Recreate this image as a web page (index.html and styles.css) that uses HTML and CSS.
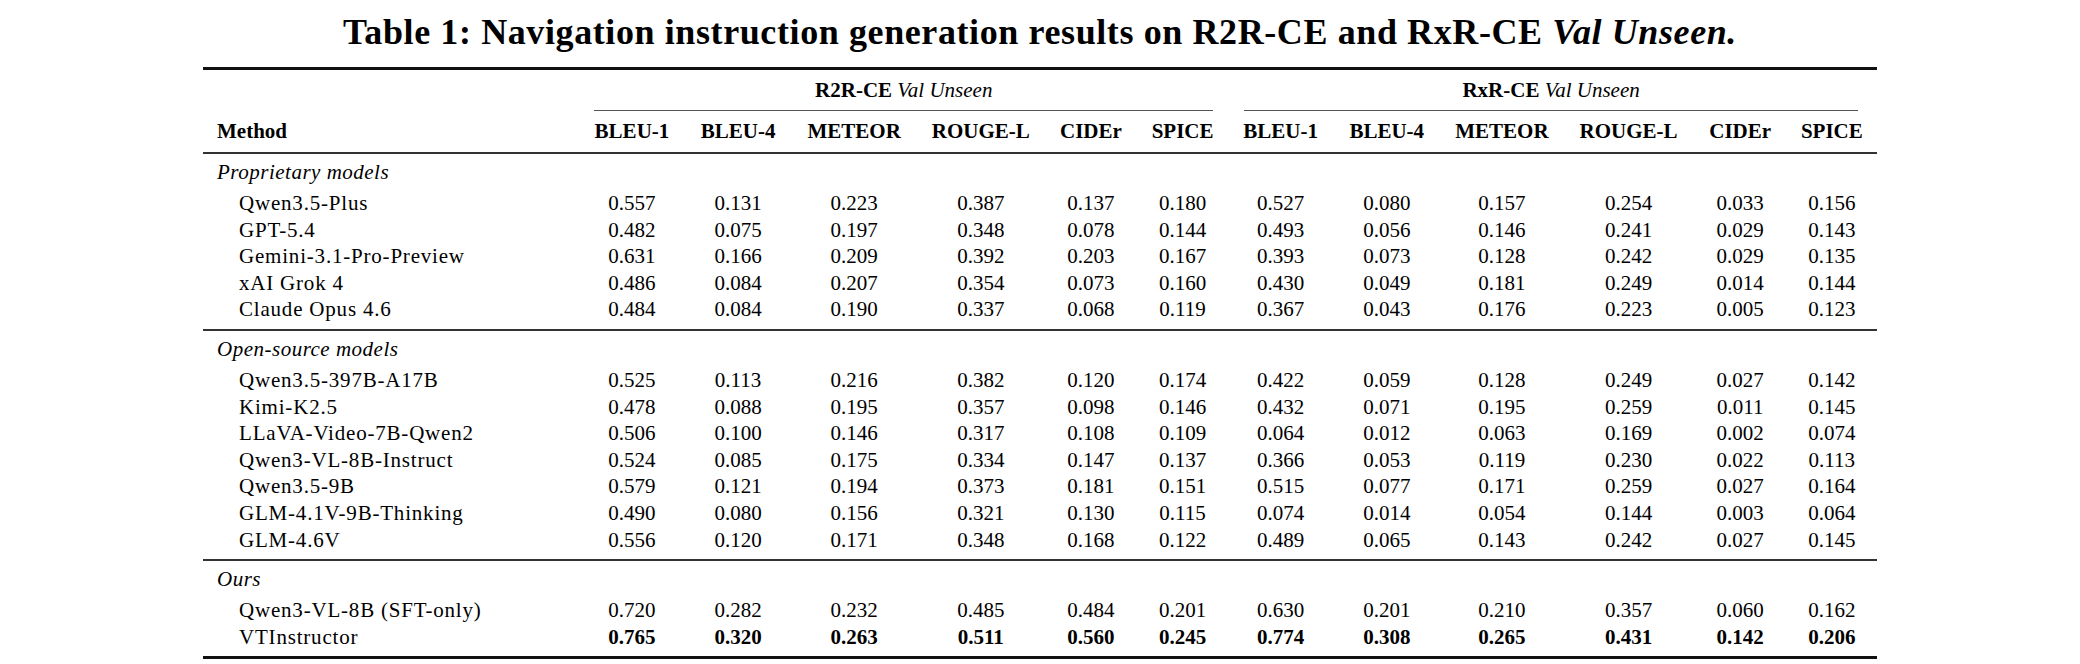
FILE: index.html
```html
<!DOCTYPE html>
<html lang="en">
<head>
    <meta charset="UTF-8">
    <title>Table 1: Navigation instruction generation results</title>
    <link rel="stylesheet" href="styles.css">
</head>
<body>
    <div class="page">
        <h1 class="caption">Table 1: Navigation instruction generation results on R2R-CE and RxR-CE <em>Val Unseen.</em></h1>

        <table class="results">
            <colgroup>
                <col class="c-method">
                <col class="c-b1"><col class="c-b4"><col class="c-met"><col class="c-rou"><col class="c-cid"><col class="c-spi">
                <col class="c-b1"><col class="c-b4"><col class="c-met2"><col class="c-rou2"><col class="c-cid2"><col class="c-spi2">
            </colgroup>
            <thead>
                <tr class="group-row">
                    <th></th>
                    <th colspan="6"><div class="group-label"><b>R2R-CE</b> <i>Val Unseen</i></div></th>
                    <th colspan="6"><div class="group-label group-right"><b>RxR-CE</b> <i>Val Unseen</i></div></th>
                </tr>
                <tr class="metric-row">
                    <th class="method">Method</th>
                    <th>BLEU-1</th><th>BLEU-4</th><th>METEOR</th><th>ROUGE-L</th><th>CIDEr</th><th>SPICE</th>
                    <th>BLEU-1</th><th>BLEU-4</th><th>METEOR</th><th>ROUGE-L</th><th>CIDEr</th><th>SPICE</th>
                </tr>
            </thead>

            <!-- Proprietary models -->
            <tbody>
                <tr class="section"><td colspan="13"><i>Proprietary models</i></td></tr>
                <tr><td class="name">Qwen3.5-Plus</td><td>0.557</td><td>0.131</td><td>0.223</td><td>0.387</td><td>0.137</td><td>0.180</td><td>0.527</td><td>0.080</td><td>0.157</td><td>0.254</td><td>0.033</td><td>0.156</td></tr>
                <tr><td class="name">GPT-5.4</td><td>0.482</td><td>0.075</td><td>0.197</td><td>0.348</td><td>0.078</td><td>0.144</td><td>0.493</td><td>0.056</td><td>0.146</td><td>0.241</td><td>0.029</td><td>0.143</td></tr>
                <tr><td class="name">Gemini-3.1-Pro-Preview</td><td>0.631</td><td>0.166</td><td>0.209</td><td>0.392</td><td>0.203</td><td>0.167</td><td>0.393</td><td>0.073</td><td>0.128</td><td>0.242</td><td>0.029</td><td>0.135</td></tr>
                <tr><td class="name">xAI Grok 4</td><td>0.486</td><td>0.084</td><td>0.207</td><td>0.354</td><td>0.073</td><td>0.160</td><td>0.430</td><td>0.049</td><td>0.181</td><td>0.249</td><td>0.014</td><td>0.144</td></tr>
                <tr class="last"><td class="name">Claude Opus 4.6</td><td>0.484</td><td>0.084</td><td>0.190</td><td>0.337</td><td>0.068</td><td>0.119</td><td>0.367</td><td>0.043</td><td>0.176</td><td>0.223</td><td>0.005</td><td>0.123</td></tr>
            </tbody>

            <!-- Open-source models -->
            <tbody>
                <tr class="section"><td colspan="13"><i>Open-source models</i></td></tr>
                <tr><td class="name">Qwen3.5-397B-A17B</td><td>0.525</td><td>0.113</td><td>0.216</td><td>0.382</td><td>0.120</td><td>0.174</td><td>0.422</td><td>0.059</td><td>0.128</td><td>0.249</td><td>0.027</td><td>0.142</td></tr>
                <tr><td class="name">Kimi-K2.5</td><td>0.478</td><td>0.088</td><td>0.195</td><td>0.357</td><td>0.098</td><td>0.146</td><td>0.432</td><td>0.071</td><td>0.195</td><td>0.259</td><td>0.011</td><td>0.145</td></tr>
                <tr><td class="name">LLaVA-Video-7B-Qwen2</td><td>0.506</td><td>0.100</td><td>0.146</td><td>0.317</td><td>0.108</td><td>0.109</td><td>0.064</td><td>0.012</td><td>0.063</td><td>0.169</td><td>0.002</td><td>0.074</td></tr>
                <tr><td class="name">Qwen3-VL-8B-Instruct</td><td>0.524</td><td>0.085</td><td>0.175</td><td>0.334</td><td>0.147</td><td>0.137</td><td>0.366</td><td>0.053</td><td>0.119</td><td>0.230</td><td>0.022</td><td>0.113</td></tr>
                <tr><td class="name">Qwen3.5-9B</td><td>0.579</td><td>0.121</td><td>0.194</td><td>0.373</td><td>0.181</td><td>0.151</td><td>0.515</td><td>0.077</td><td>0.171</td><td>0.259</td><td>0.027</td><td>0.164</td></tr>
                <tr><td class="name">GLM-4.1V-9B-Thinking</td><td>0.490</td><td>0.080</td><td>0.156</td><td>0.321</td><td>0.130</td><td>0.115</td><td>0.074</td><td>0.014</td><td>0.054</td><td>0.144</td><td>0.003</td><td>0.064</td></tr>
                <tr class="last"><td class="name">GLM-4.6V</td><td>0.556</td><td>0.120</td><td>0.171</td><td>0.348</td><td>0.168</td><td>0.122</td><td>0.489</td><td>0.065</td><td>0.143</td><td>0.242</td><td>0.027</td><td>0.145</td></tr>
            </tbody>

            <!-- Ours -->
            <tbody>
                <tr class="section"><td colspan="13"><i>Ours</i></td></tr>
                <tr><td class="name">Qwen3-VL-8B (SFT-only)</td><td>0.720</td><td>0.282</td><td>0.232</td><td>0.485</td><td>0.484</td><td>0.201</td><td>0.630</td><td>0.201</td><td>0.210</td><td>0.357</td><td>0.060</td><td>0.162</td></tr>
                <tr class="last best"><td class="name">VTInstructor</td><td>0.765</td><td>0.320</td><td>0.263</td><td>0.511</td><td>0.560</td><td>0.245</td><td>0.774</td><td>0.308</td><td>0.265</td><td>0.431</td><td>0.142</td><td>0.206</td></tr>
            </tbody>
        </table>
    </div>
</body>
</html>
```

FILE: styles.css
```css
body {
    margin: 0;
    background: #ffffff;
    color: #000000;
    font-family: "Liberation Serif", "Times New Roman", serif;
}
.page {
    padding-top: 12px;
}
.caption {
    margin: 0;
    font-size: 36px;
    line-height: 40px;
    letter-spacing: 0.6px;
    font-weight: bold;
    text-align: center;
}
.caption em {
    font-style: italic;
}

.results {
    width: 1674px;
    margin: 15px auto 0;
    table-layout: fixed;
    border-collapse: separate;
    border-spacing: 0;
    font-size: 21px;
}
.c-method { width: 376px; }
.c-b1 { width: 105px; }
.c-b4 { width: 107px; }
.c-met { width: 125px; }
.c-rou { width: 128px; }
.c-cid { width: 92px; }
.c-spi { width: 91px; }
.c-met2 { width: 123px; }
.c-rou2 { width: 130px; }
.c-cid2 { width: 93px; }
.c-spi2 { width: 90px; }

th, td {
    padding: 0 14px;
    line-height: 26.6px;
    text-align: center;
    white-space: nowrap;
}

/* header */
.group-row th {
    padding: 0;
    border-top: 3px solid #111;
    font-weight: normal;
}
.group-label {
    margin: 0 15px;
    padding: 7px 0;
    line-height: 26px;
    border-bottom: 1px solid #555;
}
.group-right {
    margin: 0 19px 0 16px;
}
.metric-row th {
    padding-top: 7px;
    padding-bottom: 8px;
    line-height: 26px;
    font-weight: bold;
}
.metric-row th.method {
    text-align: left;
}

/* body */
.section td {
    text-align: left;
    padding-top: 5px;
    padding-bottom: 5px;
    line-height: 26px;
    letter-spacing: 0.5px;
    border-top: 2px solid #333;
}
td.name {
    text-align: left;
    padding-left: 36px;
    letter-spacing: 0.8px;
}
tr.last td {
    padding-bottom: 6px;
}
tbody:last-of-type tr.last td {
    border-bottom: 3px solid #111;
}
tr.best td {
    font-weight: bold;
}
tr.best td.name {
    font-weight: normal;
}
```
